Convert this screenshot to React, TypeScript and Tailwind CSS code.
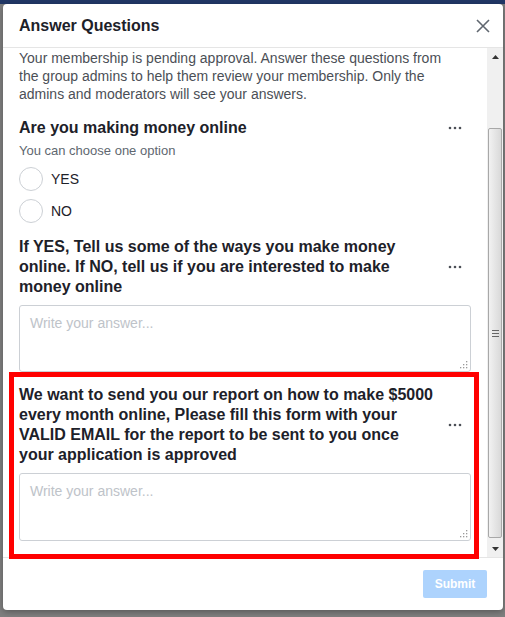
import React from "react";

function Dots() {
  return (
    <div className="flex w-[24px] shrink-0 justify-center mr-[4px]">
      <svg width="14" height="4" viewBox="0 0 14 4">
        <circle cx="2" cy="2" r="1.3" fill="#4b4f56" />
        <circle cx="7" cy="2" r="1.3" fill="#4b4f56" />
        <circle cx="12" cy="2" r="1.3" fill="#4b4f56" />
      </svg>
    </div>
  );
}

function QuestionTitle({ children }: { children: React.ReactNode }) {
  return (
    <div className="flex items-center">
      <div className="flex-1 pr-[7px] text-[16px] font-bold leading-[20px] text-[#1d2129]">{children}</div>
      <Dots />
    </div>
  );
}

function AnswerBox({ height }: { height: string }) {
  return (
    <div className={`relative mt-[8px] ${height}`}>
      <textarea
        placeholder="Write your answer..."
        className="h-full w-full resize-none rounded-[3px] border border-[#ccd0d5] px-[10px] py-[8px] text-[14px] leading-[18px] text-[#1d2129] outline-none placeholder:text-[#bec3c9]"
      />
      {/* resize grip */}
      <svg className="absolute bottom-[3px] right-[3px]" width="8" height="8" viewBox="0 0 8 8">
        <rect x="6" y="0" width="1.3" height="1.3" fill="#9a9a9a" />
        <rect x="3" y="3" width="1.3" height="1.3" fill="#9a9a9a" />
        <rect x="6" y="3" width="1.3" height="1.3" fill="#9a9a9a" />
        <rect x="0" y="6" width="1.3" height="1.3" fill="#9a9a9a" />
        <rect x="3" y="6" width="1.3" height="1.3" fill="#9a9a9a" />
        <rect x="6" y="6" width="1.3" height="1.3" fill="#9a9a9a" />
      </svg>
    </div>
  );
}

function Radio({ label }: { label: string }) {
  return (
    <div className="flex h-[24px] items-center">
      <span className="h-[24px] w-[24px] rounded-full border border-[#ccd0d5] bg-white" />
      <span className="ml-[8px] text-[14px] text-[#1d2129]">{label}</span>
    </div>
  );
}

function ScrollBar() {
  return (
    <div className="flex w-[16px] shrink-0 flex-col bg-[#f0f0f0]">
      {/* up arrow */}
      <div className="flex h-[17px] items-center justify-center">
        <svg width="7" height="4" viewBox="0 0 7 4">
          <path d="M0 4 L3.5 0 L7 4 Z" fill="#333" />
        </svg>
      </div>
      <div className="flex-1">
        <div className="mx-[1px] mt-[63px] flex h-[410px] items-center justify-center rounded-[2px] border border-[#a8a8a8] bg-gradient-to-r from-[#f2f2f2] to-[#d9d9d9]">
          <div className="flex flex-col gap-[2px]">
            <span className="block h-[1px] w-[7px] bg-[#666]" />
            <span className="block h-[1px] w-[7px] bg-[#666]" />
            <span className="block h-[1px] w-[7px] bg-[#666]" />
          </div>
        </div>
      </div>
      {/* down arrow */}
      <div className="flex h-[17px] items-center justify-center">
        <svg width="7" height="4" viewBox="0 0 7 4">
          <path d="M0 0 L3.5 4 L7 0 Z" fill="#333" />
        </svg>
      </div>
    </div>
  );
}

export default function App() {
  return (
    <div className="relative h-[617px] w-[505px] overflow-hidden bg-[#7f7f7f] font-['Liberation_Sans',Arial,sans-serif]">
      {/* page behind the overlay */}
      <div className="h-[4px] bg-[#213766]" />

      {/* Dialog */}
      <div className="ml-[3px] flex h-[606px] w-[500px] flex-col overflow-hidden rounded-[4px] bg-white shadow-[0_2px_6px_rgba(0,0,0,0.3)]">
        {/* Header */}
        <div className="box-content flex h-[43px] shrink-0 items-center justify-between border-b border-[#e5e5e5] pl-[16px] pr-[13px]">
          <span className="pt-[1px] text-[16px] font-bold text-[#1d2129]">Answer Questions</span>
          <svg width="14" height="14" viewBox="0 0 14 14">
            <path d="M1 1 L13 13 M13 1 L1 13" stroke="#606770" strokeWidth="1.6" />
          </svg>
        </div>

        {/* Body */}
        <div className="flex h-[509px] shrink-0">
          <div className="flex-1 overflow-hidden px-[16px] pt-[1px]">
            <p className="pr-[12px] text-[14px] leading-[18px] text-[#4b4f56]">
              Your membership is pending approval. Answer these questions from the group admins to help them review
              your membership. Only the admins and moderators will see your answers.
            </p>

            <div className="mt-[15px]">
              <QuestionTitle>Are you making money online</QuestionTitle>
              <div className="mt-[5px] text-[13px] leading-[16px] text-[#606770]">You can choose one option</div>
              <div className="mt-[8px] flex flex-col gap-[8px]">
                <Radio label="YES" />
                <Radio label="NO" />
              </div>
            </div>

            <div className="mt-[14px]">
              <QuestionTitle>
                If YES, Tell us some of the ways you make money online. If NO, tell us if you are interested to make
                money online
              </QuestionTitle>
              <AnswerBox height="h-[67px]" />
            </div>

            <div className="mt-[13px]">
              <QuestionTitle>
                We want to send you our report on how to make $5000 every month online, Please fill this form with
                your VALID EMAIL for the report to be sent to you once your application is approved
              </QuestionTitle>
              <AnswerBox height="h-[68px]" />
            </div>
          </div>
          <ScrollBar />
        </div>

        {/* Footer */}
        <div className="flex flex-1 items-start justify-end border-t border-[#e5e5e5] pr-[16px] pt-[12px]">
          <button className="h-[28px] w-[64px] rounded-[2px] bg-[#add3fd] text-[12px] font-bold text-white">
            Submit
          </button>
        </div>
      </div>

      {/* red highlight annotation */}
      <div className="absolute left-[9px] top-[372px] h-[187px] w-[470px] border-[5px] border-[#ff0000]" />
    </div>
  );
}
